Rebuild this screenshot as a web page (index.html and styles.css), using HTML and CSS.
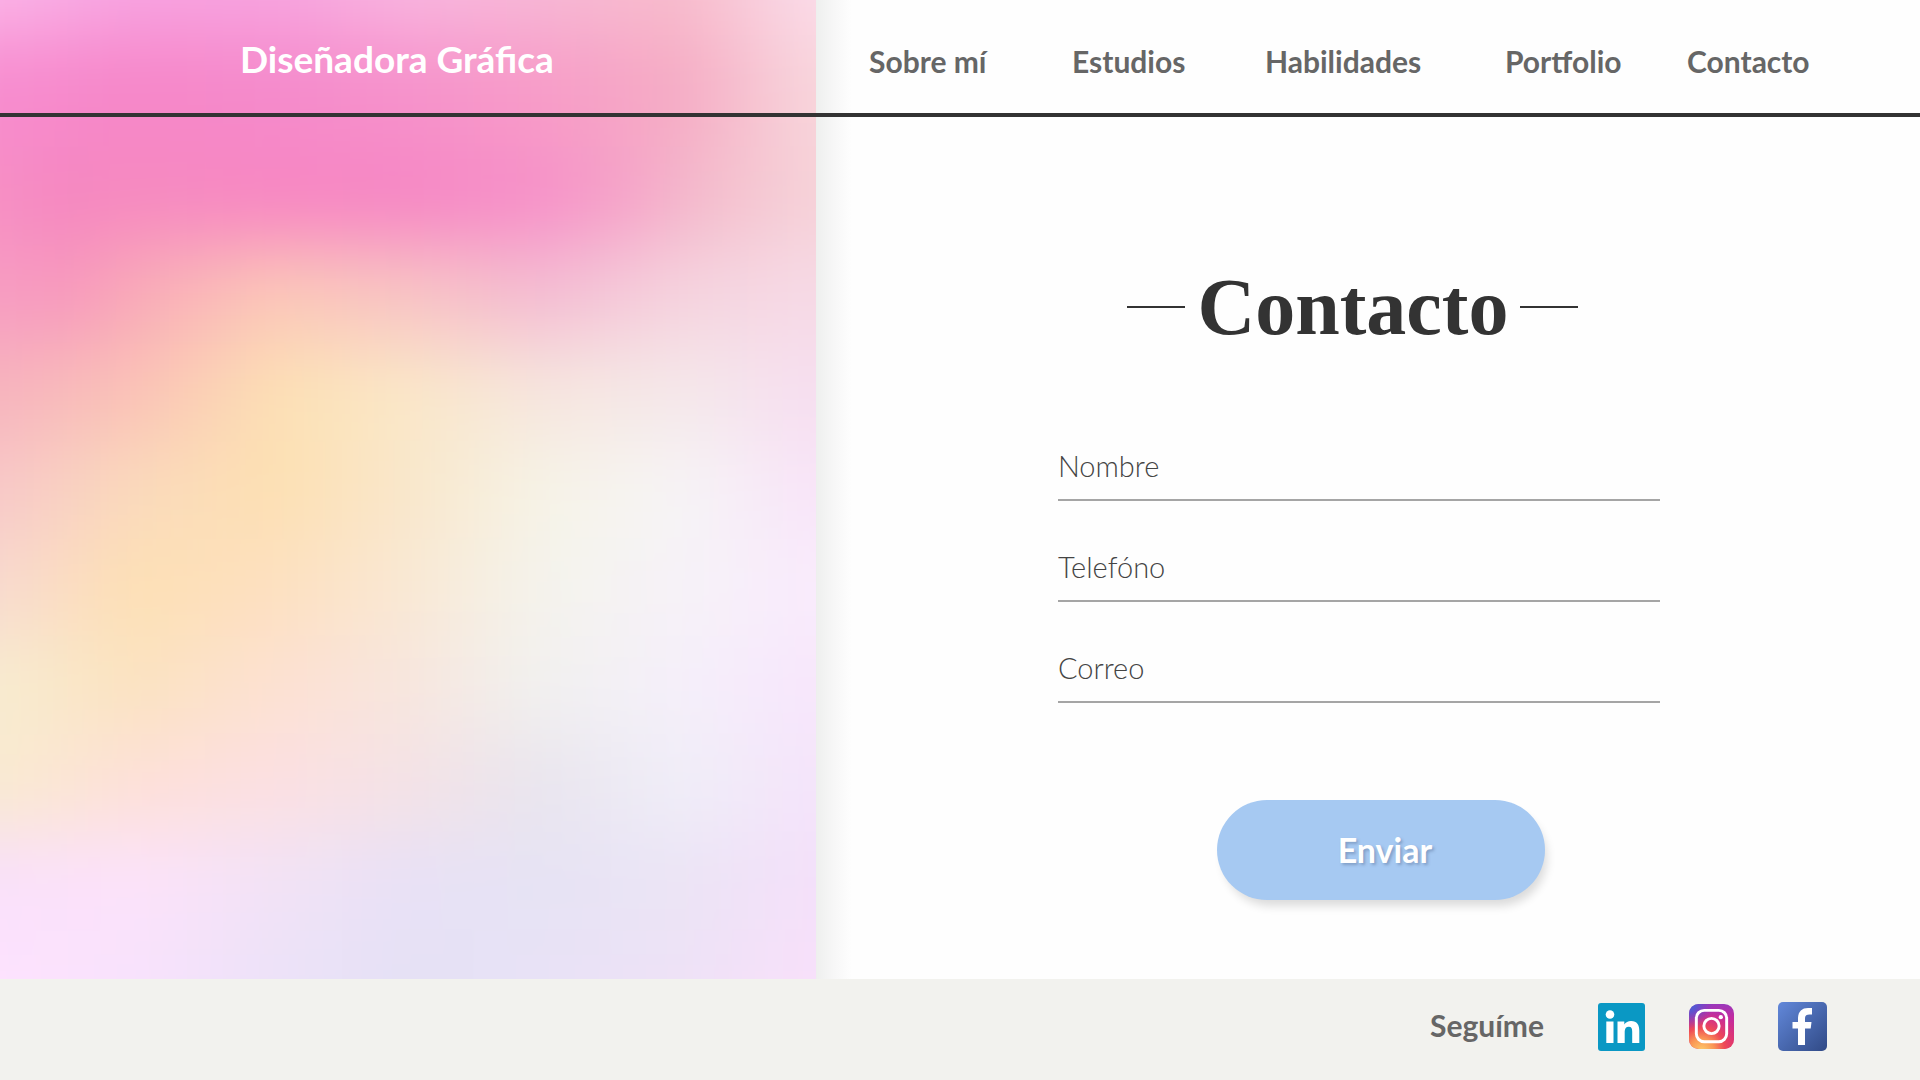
FILE: index.html
```
<!DOCTYPE html>
<html lang="es">
<head>
<meta charset="utf-8">
<meta name="viewport" content="width=device-width, initial-scale=1">
<title>Contacto</title>
<link rel="stylesheet" href="styles.css">
</head>
<body>
<div class="page">
  <div class="art" aria-hidden="true">
    <svg viewBox="0 0 816 980" preserveAspectRatio="none">
      <defs>
        <filter id="soft" filterUnits="userSpaceOnUse" x="-100" y="-200" width="1016" height="1380" color-interpolation-filters="sRGB"><feGaussianBlur stdDeviation="26 36"/></filter>
        <linearGradient id="r0"><stop offset="0.1" stop-color="#fbb5e8"/><stop offset="0.23" stop-color="#f8a4e2"/><stop offset="0.37" stop-color="#f8a4e0"/><stop offset="0.5" stop-color="#f9b6e0"/><stop offset="0.63" stop-color="#f7b8d6"/><stop offset="0.77" stop-color="#f8bccc"/><stop offset="0.9" stop-color="#fbdcea"/></linearGradient>
        <linearGradient id="r1"><stop offset="0.1" stop-color="#f78ccf"/><stop offset="0.23" stop-color="#f686c8"/><stop offset="0.37" stop-color="#f58acb"/><stop offset="0.5" stop-color="#f692cb"/><stop offset="0.63" stop-color="#f79cc8"/><stop offset="0.77" stop-color="#f5acc4"/><stop offset="0.9" stop-color="#f8d6dc"/></linearGradient>
        <linearGradient id="r2"><stop offset="0.1" stop-color="#f78fc4"/><stop offset="0.16" stop-color="#f586c0"/><stop offset="0.23" stop-color="#f68ac0"/><stop offset="0.37" stop-color="#f786c2"/><stop offset="0.5" stop-color="#f686c4"/><stop offset="0.63" stop-color="#f690c8"/><stop offset="0.71" stop-color="#f5a2c8"/><stop offset="0.79" stop-color="#f4bccc"/><stop offset="0.9" stop-color="#f6d2d8"/></linearGradient>
        <linearGradient id="r3"><stop offset="0.1" stop-color="#f79dc2"/><stop offset="0.16" stop-color="#f798bd"/><stop offset="0.23" stop-color="#f9aab8"/><stop offset="0.37" stop-color="#fbc8b8"/><stop offset="0.5" stop-color="#f8c4c4"/><stop offset="0.63" stop-color="#f4bcd2"/><stop offset="0.77" stop-color="#f5d3de"/><stop offset="0.9" stop-color="#f6dae6"/></linearGradient>
        <linearGradient id="r4"><stop offset="0.1" stop-color="#f7b4be"/><stop offset="0.23" stop-color="#fac2b6"/><stop offset="0.37" stop-color="#fce0b4"/><stop offset="0.5" stop-color="#fae8c8"/><stop offset="0.63" stop-color="#f6e6de"/><stop offset="0.77" stop-color="#f5e8ea"/><stop offset="0.9" stop-color="#f6def0"/></linearGradient>
        <linearGradient id="r5"><stop offset="0.1" stop-color="#f8c8c8"/><stop offset="0.23" stop-color="#fadabc"/><stop offset="0.37" stop-color="#fde0b2"/><stop offset="0.5" stop-color="#f9e7cb"/><stop offset="0.63" stop-color="#f6f3e6"/><stop offset="0.77" stop-color="#f6f4f6"/><stop offset="0.9" stop-color="#f8e4f8"/></linearGradient>
        <linearGradient id="r6"><stop offset="0.1" stop-color="#f8dacf"/><stop offset="0.23" stop-color="#fde0b4"/><stop offset="0.37" stop-color="#fde0c0"/><stop offset="0.5" stop-color="#f9e8d4"/><stop offset="0.63" stop-color="#f4f3ec"/><stop offset="0.77" stop-color="#f6f2f8"/><stop offset="0.9" stop-color="#f9ebfc"/></linearGradient>
        <linearGradient id="r7"><stop offset="0.1" stop-color="#f8ecd0"/><stop offset="0.23" stop-color="#fbe3c0"/><stop offset="0.37" stop-color="#fde0d2"/><stop offset="0.5" stop-color="#f7e6de"/><stop offset="0.63" stop-color="#f1f1ef"/><stop offset="0.77" stop-color="#f5effa"/><stop offset="0.9" stop-color="#f7e6fb"/></linearGradient>
        <linearGradient id="r8"><stop offset="0.1" stop-color="#f9ead0"/><stop offset="0.23" stop-color="#fde0d8"/><stop offset="0.37" stop-color="#fce0e2"/><stop offset="0.5" stop-color="#f4e2e6"/><stop offset="0.63" stop-color="#e9e5ee"/><stop offset="0.77" stop-color="#f0eef8"/><stop offset="0.9" stop-color="#f4e4fa"/></linearGradient>
        <linearGradient id="r9"><stop offset="0.1" stop-color="#f9e0fa"/><stop offset="0.23" stop-color="#fce2fa"/><stop offset="0.37" stop-color="#f2e2f6"/><stop offset="0.5" stop-color="#e8e1f6"/><stop offset="0.63" stop-color="#e6e3f4"/><stop offset="0.77" stop-color="#ebe4f5"/><stop offset="0.9" stop-color="#f4e0fa"/></linearGradient>
        <linearGradient id="r10"><stop offset="0.1" stop-color="#fde2fe"/><stop offset="0.23" stop-color="#f8e2fc"/><stop offset="0.37" stop-color="#ece2f8"/><stop offset="0.5" stop-color="#e5e1f5"/><stop offset="0.63" stop-color="#e8e2f6"/><stop offset="0.77" stop-color="#eee2f6"/><stop offset="0.9" stop-color="#f8e0fa"/></linearGradient>
      </defs>
      <g filter="url(#soft)">
        <rect x="-100" y="-200" width="1016" height="236" fill="url(#r0)"/>
        <rect x="-100" y="35" width="1016" height="113" fill="url(#r1)"/>
        <rect x="-100" y="147" width="1016" height="99" fill="url(#r2)"/>
        <rect x="-100" y="245" width="1016" height="99" fill="url(#r3)"/>
        <rect x="-100" y="343" width="1016" height="99" fill="url(#r4)"/>
        <rect x="-100" y="441" width="1016" height="99" fill="url(#r5)"/>
        <rect x="-100" y="539" width="1016" height="99" fill="url(#r6)"/>
        <rect x="-100" y="637" width="1016" height="99" fill="url(#r7)"/>
        <rect x="-100" y="735" width="1016" height="99" fill="url(#r8)"/>
        <rect x="-100" y="833" width="1016" height="99" fill="url(#r9)"/>
        <rect x="-100" y="931" width="1016" height="249" fill="url(#r10)"/>
      </g>
    </svg>
  </div>

  <header class="header">
    <a class="brand" href="#">Diseñadora Gráfica</a>
    <nav class="nav">
      <a href="#">Sobre mí</a>
      <a href="#">Estudios</a>
      <a href="#">Habilidades</a>
      <a href="#">Portfolio</a>
      <a href="#">Contacto</a>
    </nav>
  </header>

  <main class="main">
    <h1 class="title">Contacto</h1>
    <form class="form">
      <div class="field"><label for="nombre">Nombre</label><input id="nombre" type="text"></div>
      <div class="field"><label for="telefono">Telefóno</label><input id="telefono" type="tel"></div>
      <div class="field"><label for="correo">Correo</label><input id="correo" type="email"></div>
      <button class="send" type="button">Enviar</button>
    </form>
  </main>

  <footer class="footer">
    <span class="follow">Seguíme</span>
    <div class="social">
      <a href="#" aria-label="LinkedIn">
        <svg width="47" height="48" viewBox="0 0 47 48"><rect width="47" height="48" rx="3" fill="#0a98c4"/><circle cx="12" cy="11.500" r="4.300" fill="#fff"/><path fill="#fff" d="M8.300 18.500h7.200V40H8.300zM19.500 18.500h6.800v3c1.400-2.300 3.700-3.600 6.800-3.600 6 0 8.200 3.800 8.200 9.600V40h-7.100V28.700c0-3-.8-4.900-3.400-4.900-2.800 0-4.100 2-4.100 4.900V40h-7.200z"/></svg>
      </a>
      <a href="#" aria-label="Instagram">
        <svg width="45" height="45" viewBox="0 0 46 46">
          <defs>
            <linearGradient id="ig" x1="0" y1="0" x2="0" y2="1"><stop offset="0" stop-color="#9a38bb"/><stop offset=".3" stop-color="#c32ba0"/><stop offset="1" stop-color="#e23464"/></linearGradient>
            <radialGradient id="igw" cx=".28" cy="1.050" r=".95"><stop offset=".05" stop-color="#fdc468"/><stop offset=".3" stop-color="#fa9655"/><stop offset=".55" stop-color="#ee4a56"/><stop offset="1" stop-color="#d92d83" stop-opacity="0"/></radialGradient>
            <radialGradient id="igb" cx="0" cy="0" r=".55"><stop offset="0" stop-color="#3c68dc"/><stop offset=".3" stop-color="#5a55d0"/><stop offset="1" stop-color="#7b40c6" stop-opacity="0"/></radialGradient>
          </defs>
          <rect width="46" height="46" rx="10" fill="url(#ig)"/><rect width="46" height="46" rx="10" fill="url(#igw)"/><rect width="46" height="46" rx="10" fill="url(#igb)"/>
          <rect x="7.500" y="6.500" width="31" height="32" rx="8" fill="none" stroke="#fff" stroke-width="3"/><circle cx="23" cy="22.500" r="7.800" fill="none" stroke="#fff" stroke-width="3"/><circle cx="32.500" cy="13.500" r="2.200" fill="#fff"/>
        </svg>
      </a>
      <a href="#" aria-label="Facebook">
        <svg width="49" height="49" viewBox="0 0 49 49"><defs><linearGradient id="fb" x1="0" y1="0" x2="1" y2="1"><stop offset="0" stop-color="#6288da"/><stop offset="1" stop-color="#314a86"/></linearGradient></defs><rect width="49" height="49" rx="5" fill="url(#fb)"/><path fill="#fff" d="M20 43V26.500h-5.500V20H20v-3.500C20 9.500 24 6 30 6h4v6.500h-2.500c-3 0-4.500 1-4.500 4V20h6.500l-.8 6.500H27V43z"/></svg>
      </a>
    </div>
  </footer>
</div>
</body>
</html>
```
FILE: styles.css
```
* { box-sizing: border-box; }

body {
  margin: 0;
  background: #fefefe;
  font-family: Lato, "Open Sans", sans-serif;
  color: #333;
}

a { color: inherit; text-decoration: none; }

.page {
  position: relative;
  display: flex;
  flex-direction: column;
  min-height: 100vh;
}

/* Colour wash behind the header and the left column */
.art {
  position: absolute;
  top: 0;
  bottom: 101px;
  left: 0;
  z-index: -1;
  width: 42.5%;
  background: #f7e6ee;
}

.art svg {
  display: block;
  width: 100%;
  height: 100%;
}

.art::after {
  content: "";
  position: absolute;
  top: 0;
  bottom: 0;
  left: 100%;
  width: 36px;
  background: linear-gradient(to right, #eeefee, #f7f7f7 50%, #fefefe);
}

.header {
  display: grid;
  grid-template-columns: 869fr 1051fr;
  align-items: center;
  height: 117px;
  border-bottom: 4px solid #333;
}

.brand {
  padding: 4px 0 0 240px;
  color: #fff;
  font-size: 37px;
  font-weight: 700;
  line-height: 44px;
  white-space: nowrap;
}

.nav {
  display: grid;
  grid-template-columns: 203fr 193fr 240fr 182fr 233fr;
  padding-top: 8px;
  color: #666;
  font-size: 30px;
  font-weight: 700;
  white-space: nowrap;
}

.main {
  flex: 1;
  width: 602px;
  margin-left: 55.1%;
}

.title {
  display: flex;
  align-items: center;
  justify-content: center;
  gap: 12px;
  margin: 140px 12px 0 0;
  font: 700 80px/100px "Liberation Serif", serif;
}

.title::before,
.title::after {
  content: "";
  width: 58px;
  height: 2px;
  background: #333;
}

.form {
  display: flex;
  flex-direction: column;
  margin-top: 43px;
}

.field {
  display: flex;
  align-items: flex-end;
  height: 101px;
  padding-bottom: 13px;
  border-bottom: 2px solid #a5a5a5;
  color: #444;
  font-size: 29px;
  font-weight: 300;
  line-height: 40px;
}

.field input {
  flex: 1;
  min-width: 0;
  height: 40px;
  padding: 0 12px;
  border: 0;
  outline: 0;
  background: transparent;
  color: inherit;
  font: inherit;
}

.send {
  width: 328px;
  height: 100px;
  margin: 97px 0 0 159px;
  padding: 0 0 0 8px;
  border: 0;
  border-radius: 50px;
  background: #a6c9f2;
  box-shadow: 4px 8px 10px -2px rgba(0, 0, 0, .14);
  color: #fff;
  font: 700 34px/40px Lato, sans-serif;
  text-shadow: 2px 2px 3px rgba(60, 80, 120, .35);
}

.footer {
  display: flex;
  align-items: center;
  justify-content: flex-end;
  gap: 54px;
  height: 101px;
  padding: 0 93px 6px 0;
  background: #f2f2ee;
}

.follow {
  padding-bottom: 4px;
  color: #666;
  font-size: 30px;
  font-weight: 700;
}

.social {
  display: flex;
  align-items: center;
  gap: 44px;
}

.social a,
.social svg { display: block; }
```
